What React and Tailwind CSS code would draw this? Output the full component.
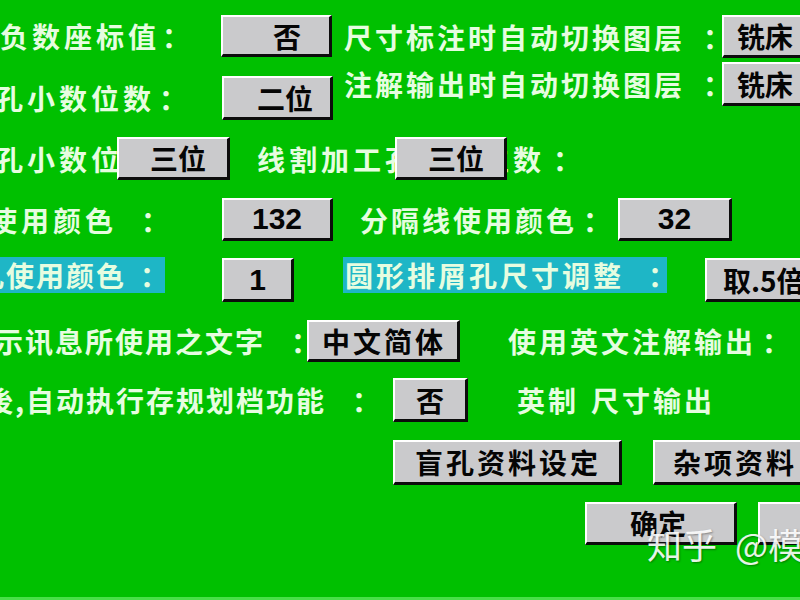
import React from 'react';
import clsx from 'clsx';

// Raised grey push button of the old DOS-style settings dialog
const Btn = ({ children, className, num }) => (
  <div
    className={clsx(
      'flex items-center shrink-0 self-stretch bg-[#cacacc] border-t-2 border-l-2 border-white border-r-[3px] border-b-[3px] border-r-[#0c0c0c] border-b-[#0c0c0c] text-[#050505] font-bold leading-none whitespace-nowrap overflow-hidden',
      num ? "text-[30px] font-['Liberation_Sans',sans-serif]" : 'text-[28px]',
      className
    )}
  >
    {children}
  </div>
);

// Light label drawn straight on the green panel
const Label = ({ children, className }) => (
  <div className={clsx('shrink-0 whitespace-nowrap leading-none', className)}>{children}</div>
);

// the dialog puts its colons a little away from the text
const Colon = ({ className }) => <span className={clsx('tracking-normal', className)}>：</span>;

export default function App() {
  return (
    <div className="w-[800px] h-[600px] overflow-hidden relative bg-[#00c000] border-b-[3px] border-[#48e048] font-['Noto_Sans_CJK_SC',sans-serif] font-bold text-[28px] text-[#e6fde0] pt-[15px] flex flex-col">
      {/* two stacked settings on each side */}
      <div className="flex h-[105px] shrink-0">
        <div className="w-[345px] shrink-0 flex flex-col">
          <div className="flex items-center h-[42px]">
            <Label className="w-[222px] -ml-[1px] pl-[1px] tracking-[4px]">
              负数座标值<Colon className="ml-[2px]" />
            </Label>
            <Btn className="w-[111px] pl-[50px]">否</Btn>
          </div>
          <div className="flex items-center h-[44px] mt-[19px]">
            <Label className="w-[227px] -ml-[5px] tracking-[4px]">
              孔小数位数<Colon className="ml-[4px]" />
            </Label>
            <Btn className="w-[111px] pl-[33px]">二位</Btn>
          </div>
        </div>
        <div className="flex flex-col">
          <div className="flex items-center h-[43px]">
            <Label className="w-[378px] -ml-[1px] tracking-[3px]">
              尺寸标注时自动切换图层<Colon className="ml-[18px]" />
            </Label>
            <Btn className="w-[100px] pl-[13px]">铣床</Btn>
          </div>
          <div className="flex items-center h-[44px] mt-[4px]">
            <Label className="w-[378px] -ml-[1px] tracking-[3px]">
              注解输出时自动切换图层<Colon className="ml-[18px]" />
            </Label>
            <Btn className="w-[100px] pl-[13px]">铣床</Btn>
          </div>
        </div>
      </div>

      {/* decimal places, the wire-cut field sits under its button */}
      <div className="flex items-center h-[43px] mt-[17px] shrink-0">
        <Label className="w-[122px] -ml-[5px] tracking-[4px]">孔小数位</Label>
        <Btn className="w-[113px] pl-[31px]">三位</Btn>
        <div className="relative ml-[27px] self-stretch flex items-center">
          <Label className="tracking-[4px]">
            线割加工孔小数位数<Colon className="ml-[8px]" />
          </Label>
          <Btn className="absolute left-[138px] top-0 h-[43px] w-[112px] pl-[31px]">三位</Btn>
        </div>
      </div>

      <div className="flex items-center h-[43px] mt-[18px] shrink-0">
        <Label className="w-[233px] -ml-[11px] tracking-[4px]">
          使用颜色<Colon className="ml-[24px]" />
        </Label>
        <Btn num className="w-[111px] justify-center">132</Btn>
        <Label className="w-[258px] ml-[27px] tracking-[3px]">
          分隔线使用颜色<Colon className="ml-[6px]" />
        </Label>
        <Btn num className="w-[114px] justify-center">32</Btn>
      </div>

      {/* highlighted pair */}
      <div className="flex items-start h-[44px] mt-[17px] shrink-0">
        <div className="w-[165px] h-[36px] -mt-[1px] bg-[#1eb6c6] overflow-hidden flex items-center shrink-0">
          <Label className="-ml-[24px] tracking-[2px]">
            孔使用颜色<Colon className="ml-[14px]" />
          </Label>
        </div>
        <Btn num className="w-[72px] h-[44px] ml-[57px] justify-center">1</Btn>
        <div className="w-[324px] h-[36px] -mt-[1px] ml-[49px] bg-[#1eb6c6] overflow-hidden flex items-center shrink-0">
          <Label className="pl-[2px] tracking-[3px]">
            圆形排屑孔尺寸调整<Colon className="ml-[24px]" />
          </Label>
        </div>
        <Btn className="w-[110px] h-[44px] ml-[38px] pl-[16px]">取.5倍</Btn>
      </div>

      <div className="flex items-center h-[42px] mt-[18px] shrink-0">
        <Label className="w-[312px] -ml-[5px] tracking-[2px]">
          示讯息所使用之文字<Colon className="ml-[26px]" />
        </Label>
        <Btn className="w-[153px] pl-[13px] tracking-[3px]">中文简体</Btn>
        <Label className="ml-[48px] tracking-[3px]">
          使用英文注解输出<Colon className="ml-[6px]" />
        </Label>
      </div>

      <div className="flex items-center h-[44px] mt-[16px] shrink-0">
        <Label className="w-[408px] -ml-[15px] tracking-[2px]">
          後,自动执行存规划档功能<Colon className="ml-[26px]" />
        </Label>
        <Btn className="w-[75px] justify-center">否</Btn>
        <Label className="ml-[49px] tracking-[3px]">
          英制<span className="ml-[12px]">尺寸输出</span>
        </Label>
      </div>

      {/* sub-dialogs */}
      <div className="flex h-[45px] mt-[18px] pl-[393px] shrink-0">
        <Btn className="w-[229px] pl-[20px] tracking-[3px]">盲孔资料设定</Btn>
        <Btn className="w-[160px] ml-[31px] pl-[18px] tracking-[3px]">杂项资料</Btn>
      </div>

      <div className="flex h-[43px] mt-[17px] pl-[585px] shrink-0">
        <Btn className="w-[152px] pl-[43px]">确定</Btn>
        <Btn className="w-[60px] ml-[21px]" />
      </div>

      <div className="absolute left-[647px] top-[526px] text-[35px] font-normal text-white/90 whitespace-nowrap leading-none [text-shadow:1px_1px_2px_rgba(0,0,0,0.35)]">
        知乎<span className="ml-[18px]">@模</span>
      </div>
    </div>
  );
}
